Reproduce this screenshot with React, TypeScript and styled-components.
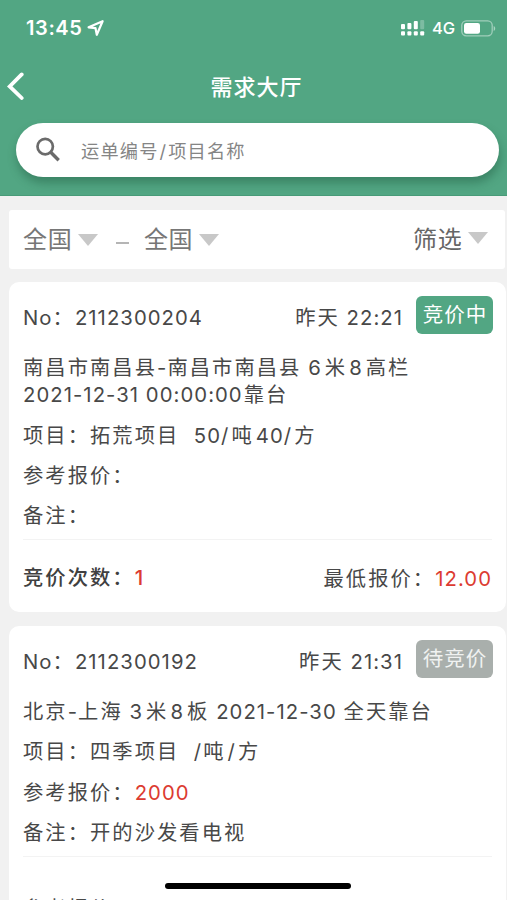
import React from 'react';
import styled, { createGlobalStyle } from 'styled-components';

const GlobalStyle = createGlobalStyle`
  * { box-sizing: border-box; }
  html, body { margin: 0; padding: 0; }
  body {
    background: #f1f1f1;
    font-family: Inter, "Noto Sans CJK SC", sans-serif;
    color: #484848;
    overflow: hidden;
  }
`;

const Screen = styled.div`
  position: relative;
  width: 507px;
  height: 900px;
  overflow: hidden;
  background: #f1f1f1;
`;

const Header = styled.header`
  height: 196px;
  background: #52a683;
  border-bottom: 1px solid #489b78;
  color: #fff;
`;

const StatusBar = styled.div`
  display: flex;
  align-items: center;
  height: 56px;
  padding: 0 11px 0 26px;
`;

const Clock = styled.span`
  width: 61px;
  font-size: 20px;
  font-weight: 600;
  letter-spacing: 0.6px;
`;

const StatusIcons = styled.div`
  display: flex;
  align-items: center;
  margin-left: auto;
`;

const Network = styled.span`
  width: 29px;
  margin-left: 7px;
  font-size: 16.5px;
  font-weight: 500;
`;

const TitleBar = styled.div`
  display: grid;
  grid-template-columns: 40px 1fr 40px;
  align-items: center;
  height: 60px;
  padding: 0 7px;
`;

const Title = styled.h1`
  margin: 2px 0 0;
  padding-left: 6px;
  text-align: center;
  font-size: 22px;
  line-height: 30px;
  font-weight: 500;
  letter-spacing: 1px;
`;

const Search = styled.label`
  display: flex;
  align-items: center;
  height: 54px;
  margin: 7px 8px 0 16px;
  padding-left: 19px;
  border-radius: 27px;
  background: #fff;
  box-shadow: 1px 6px 10px rgba(25, 80, 55, 0.4);
  svg { flex: none; margin-right: 19px; }
`;

const Placeholder = styled.span`
  margin-top: 2px;
  color: #858585;
  font-size: 18.2px;
  line-height: 26px;
  letter-spacing: 1.2px;
`;

const Filters = styled.nav`
  display: flex;
  align-items: center;
  height: 59px;
  margin: 14px 2px 0 9px;
  padding: 0 17px 0 14px;
  border-radius: 3px;
  background: #fff;
`;

const FilterItem = styled.div<{ $end?: boolean }>`
  display: flex;
  align-items: center;
  color: ${(p) => (p.$end ? '#666' : '#777')};
  font-size: 24px;
  line-height: 34px;
  letter-spacing: 0.7px;
  margin-left: ${(p) => (p.$end ? 'auto' : '0')};
`;

const Caret = styled.i<{ $raised?: boolean }>`
  margin-left: 5.5px;
  margin-bottom: ${(p) => (p.$raised ? 3 : 0)}px;
  border: 10.5px solid transparent;
  border-top: 12px solid #c8c8c8;
  border-bottom: 0;
`;

const Dash = styled.i`
  width: 13px;
  height: 2px;
  margin: 6px 15px 0 18px;
  background: #b5b5b5;
`;

const Card = styled.article`
  height: 330px;
  margin: 13px 1px 0 9px;
  padding: 14px 14px 0;
  border-radius: 10px;
  background: #fff;
  & + & { margin-top: 14px; }
`;

const CardHead = styled.div`
  display: flex;
  height: 38px;
`;

const Line = styled.div<{ $gap?: number }>`
  height: 27px;
  margin-top: ${(p) => p.$gap ?? 13.3}px;
  font-size: 20.3px;
  line-height: 27px;
  letter-spacing: 2.05px;
  white-space: pre;
`;

const Num = styled.span<{ $before?: number; $after?: number; $red?: boolean }>`
  margin-left: ${(p) => p.$before ?? 0}px;
  margin-right: ${(p) => p.$after ?? 0}px;
  letter-spacing: 1.05px;
  color: ${(p) => (p.$red ? '#dc3b31' : 'inherit')};
`;

const Push = styled.div`
  margin-left: auto;
`;

const Badge = styled.span<{ $active?: boolean }>`
  width: 77px;
  height: 38px;
  margin: 0 -1px 0 13px;
  border-radius: 6px;
  background: ${(p) => (p.$active ? '#52a683' : '#a9afac')};
  color: ${(p) => (p.$active ? '#fff' : '#f0f2f1')};
  text-align: center;
  font-size: 20.5px;
  line-height: 38px;
  letter-spacing: 1px;
  padding-left: 1px;
  white-space: nowrap;
`;

const CardFoot = styled.div`
  display: flex;
  height: 60px;
  margin-top: 10px;
  border-top: 1px solid #f3f3f3;
`;

const Strong = styled.span`
  font-weight: 500;
  color: #404040;
`;

const HomeIndicator = styled.div`
  position: absolute;
  left: 165px;
  bottom: 11px;
  width: 186px;
  height: 6px;
  border-radius: 3px;
  background: #000;
`;

function LocationIcon() {
  return (
    <svg width="18" height="18" viewBox="0 0 18 18" fill="none" stroke="#fff" strokeWidth="2.2" strokeLinejoin="round">
      <path d="M1.6 8.3 15.6 2.2 9.8 15.8 8.5 9.2Z" />
    </svg>
  );
}

function SignalIcon() {
  return (
    <svg width="24" height="17" viewBox="0 0 24 17" fill="#fff">
      <rect x="0" y="4" width="4" height="5.2" rx="1" />
      <rect x="6.4" y="3" width="4" height="6.2" rx="1" />
      <rect x="12.8" y="1" width="4" height="8.2" rx="1" />
      <rect x="19.2" y="0" width="4" height="9.2" rx="1" opacity=".25" />
      <rect x="0" y="11.2" width="4" height="4.3" rx="1" />
      <rect x="6.4" y="11.2" width="4" height="4.3" rx="1" />
      <rect x="12.8" y="11.2" width="4" height="4.3" rx="1" />
      <rect x="19.2" y="11.2" width="4" height="4.3" rx="1" />
    </svg>
  );
}

function BatteryIcon() {
  return (
    <svg width="35" height="17" viewBox="0 0 35 17" fill="none">
      <rect x="0.8" y="0.8" width="30.4" height="15" rx="4.5" stroke="#fff" strokeOpacity=".45" strokeWidth="1.3" />
      <rect x="3" y="3" width="16" height="10.7" rx="2.3" fill="#fff" />
      <path d="M32.7 6v5c2-.8 2-4.2 0-5Z" fill="#fff" fillOpacity=".5" />
    </svg>
  );
}

function BackIcon() {
  return (
    <svg width="18" height="28" viewBox="0 0 18 28" fill="none" stroke="#fff" strokeWidth="3.8" strokeLinecap="round">
      <path d="M14.7 2.4 2.7 14.4 14.7 26" />
    </svg>
  );
}

function SearchIcon() {
  return (
    <svg width="27" height="26" viewBox="0 0 27 26" fill="none" stroke="#6b6b6b">
      <circle cx="10.2" cy="9.6" r="7.7" strokeWidth="2.7" />
      <path d="m15.5 15 8.2 8.2" strokeWidth="3.4" />
    </svg>
  );
}

export default function App() {
  return (
    <>
      <GlobalStyle />
      <Screen>
        <Header>
          <StatusBar>
            <Clock>13:45</Clock>
            <LocationIcon />
            <StatusIcons>
              <SignalIcon />
              <Network>4G</Network>
              <BatteryIcon />
            </StatusIcons>
          </StatusBar>
          <TitleBar>
            <BackIcon />
            <Title>需求大厅</Title>
          </TitleBar>
          <Search>
            <SearchIcon />
            <Placeholder>运单编号<Num $before={1} $after={1}>/</Num>项目名称</Placeholder>
          </Search>
        </Header>

        <Filters>
          <FilterItem>全国<Caret /></FilterItem>
          <Dash />
          <FilterItem>全国<Caret /></FilterItem>
          <FilterItem $end>筛选<Caret $raised /></FilterItem>
        </Filters>

        <Card>
          <CardHead>
            <Line $gap={8}><Num>No</Num>：<Num>2112300204</Num></Line>
            <Push><Line $gap={8}>昨天<Num> 22:21</Num></Line></Push>
            <Badge $active>竞价中</Badge>
          </CardHead>
          <Line $gap={20}>南昌市南昌县<Num>-</Num>南昌市南昌县<Num $after={3}> 6</Num>米<Num $before={2} $after={3}>8</Num>高栏</Line>
          <Line $gap={0}><Num $after={1}>2021-12-31 00:00:00</Num>靠台</Line>
          <Line $gap={14}>项目：拓荒项目<Num $before={1} $after={2}>  50/</Num>吨<Num $before={2} $after={2}>40/</Num>方</Line>
          <Line $gap={13}>参考报价：</Line>
          <Line $gap={13}>备注：</Line>
          <CardFoot>
            <Line $gap={24}><Strong>竞价次数：<Num $red>1</Num></Strong></Line>
            <Push><Line $gap={25}>最低报价：<Num $red>12.00</Num></Line></Push>
          </CardFoot>
        </Card>

        <Card>
          <CardHead>
            <Line $gap={8}><Num>No</Num>：<Num>2112300192</Num></Line>
            <Push><Line $gap={8}>昨天<Num> 21:31</Num></Line></Push>
            <Badge>待竞价</Badge>
          </CardHead>
          <Line $gap={20}>北京<Num>-</Num>上海<Num $after={3}> 3</Num>米<Num $before={2} $after={3}>8</Num>板<Num> 2021-12-30 </Num>全天靠台</Line>
          <Line>项目：四季项目<Num $before={1} $after={1}>  /</Num>吨<Num $before={2} $after={2}>/</Num>方</Line>
          <Line>参考报价：<Num $red>2000</Num></Line>
          <Line>备注：开的沙发看电视</Line>
          <CardFoot>
            <Line $gap={38}>参考报价</Line>
          </CardFoot>
        </Card>
        <HomeIndicator />
      </Screen>
    </>
  );
}
